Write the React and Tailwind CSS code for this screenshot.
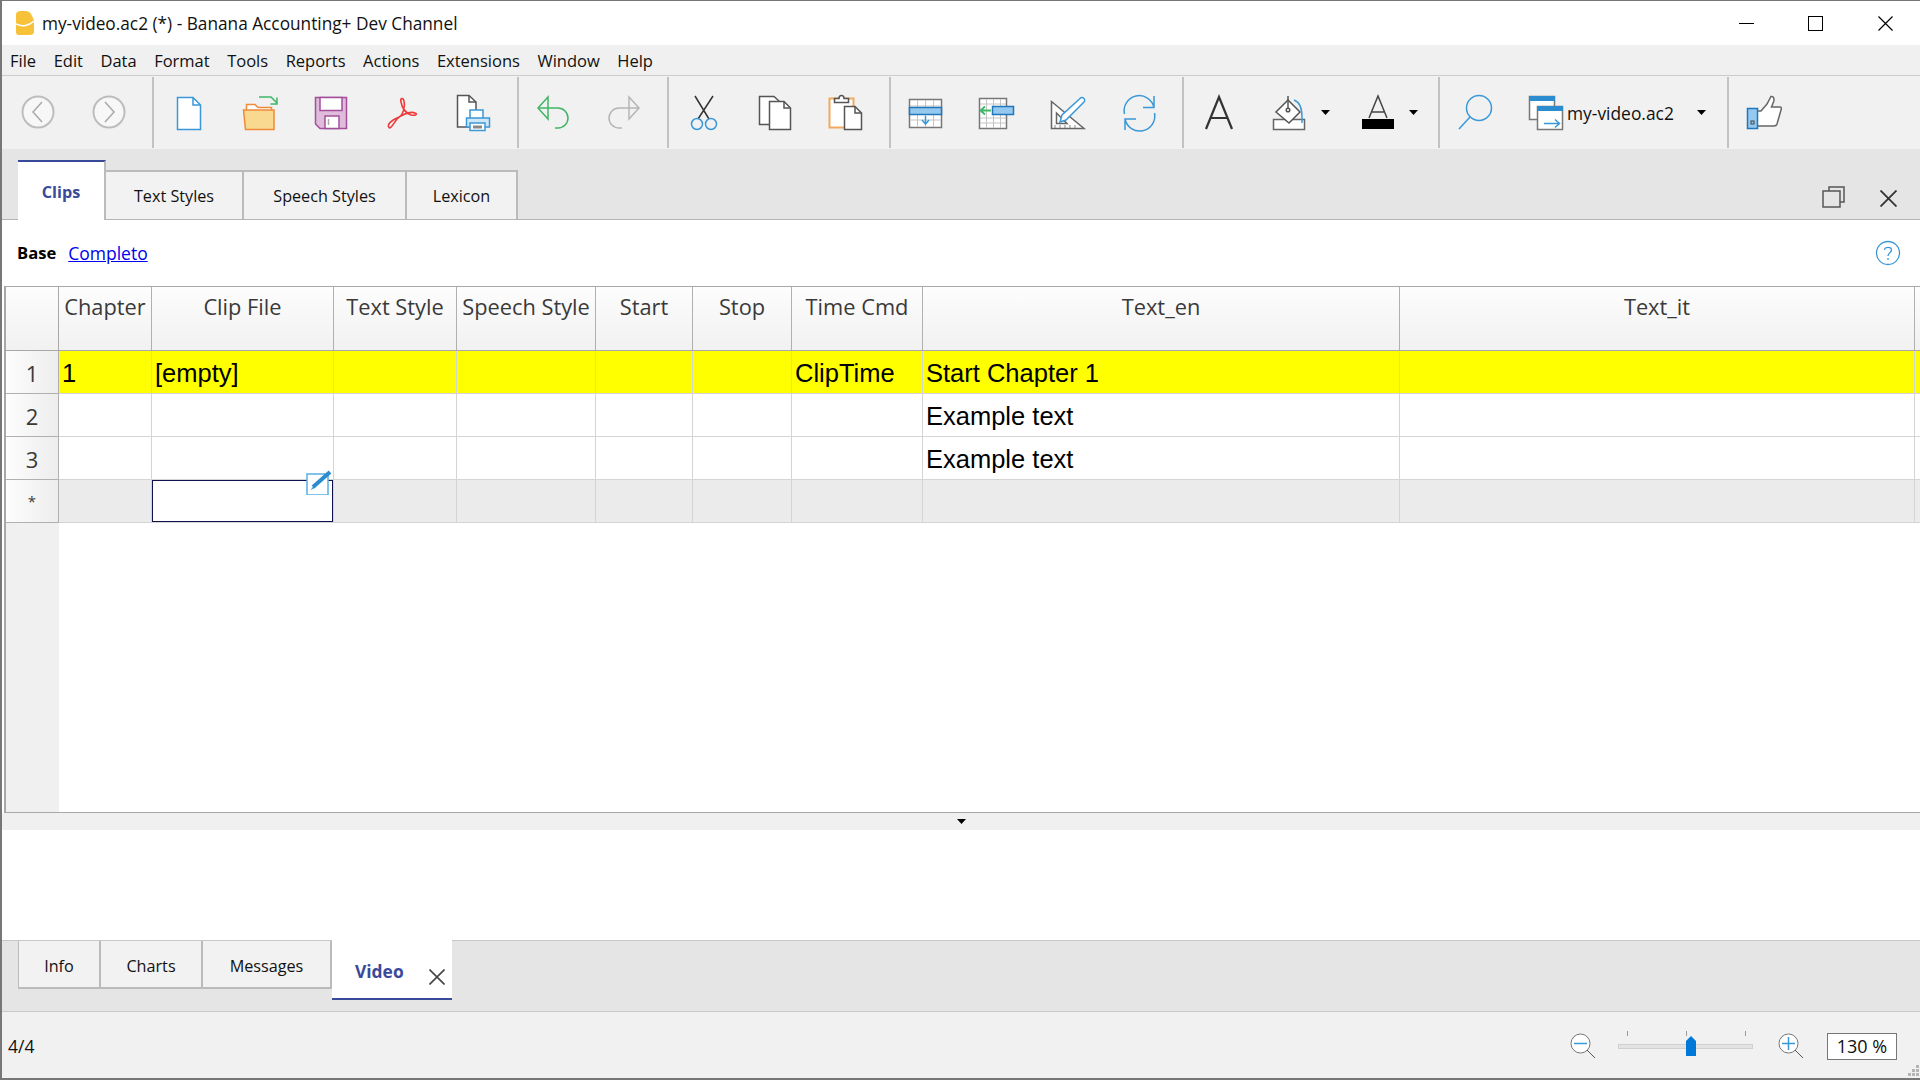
const BLUE = "#3a98d8";
const COLS = [
  { name: "Chapter", w: "w-[93px]" },
  { name: "Clip File", w: "w-[182px]" },
  { name: "Text Style", w: "w-[123px]" },
  { name: "Speech Style", w: "w-[139px]" },
  { name: "Start", w: "w-[97px]" },
  { name: "Stop", w: "w-[99px]" },
  { name: "Time Cmd", w: "w-[131px]" },
  { name: "Text_en", w: "w-[477px]" },
  { name: "Text_it", w: "w-[515px]" },
];

const ROWS = [
  { label: "1", cells: ["1", "[empty]", "", "", "", "", "ClipTime", "Start Chapter 1", ""], bg: "bg-[#ffff00]" },
  { label: "2", cells: ["", "", "", "", "", "", "", "Example text", ""], bg: "bg-white" },
  { label: "3", cells: ["", "", "", "", "", "", "", "Example text", ""], bg: "bg-white" },
];

const Icon = ({ children }) => (
  <svg width="48" height="48" viewBox="0 0 48 48" fill="none" strokeWidth="1.5">
    {children}
  </svg>
);

const ToolButton = ({ children }) => (
  <div className="w-[71px] h-full pr-[2px] flex items-center justify-center shrink-0">{children}</div>
);

const Separator = () => <div className="w-[2px] h-[71px] bg-[#c2c2c2] shrink-0" />;

const Caret = () => (
  <svg width="9" height="5" viewBox="0 0 9 5" className="shrink-0">
    <path d="M0 0H9L4.5 5Z" fill="#000" />
  </svg>
);

const Cross = ({ size, width = 1.2, color = "#000", className }) => (
  <svg width={size} height={size} viewBox={`0 0 ${size} ${size}`} className={className}>
    <path d={`M0.5 0.5L${size - 0.5} ${size - 0.5}M${size - 0.5} 0.5L0.5 ${size - 0.5}`} stroke={color} strokeWidth={width} />
  </svg>
);

const NavIcon = ({ flip }) => (
  <Icon>
    <circle cx="25" cy="23" r="15.5" fill="#f7f7f7" stroke="#bdbdbd" strokeWidth="2" />
    <path d={flip ? "M21 13L30 23L21 33" : "M29 13L20 23L29 33"} stroke="#a9a9a9" />
  </Icon>
);

const NewIcon = () => (
  <Icon>
    <path d="M12.5 8.5H28L35.5 16V40.5H12.5Z" fill="#fff" stroke={BLUE} />
    <path d="M28 8.5V16H35.5" stroke={BLUE} />
  </Icon>
);

const OpenIcon = () => (
  <Icon>
    <path d="M10.5 21V15.5H19L22 18.5H35.5V21" fill="#fff" stroke="#ef8b3a" />
    <path d="M7.5 21H38V40.5H9.5Z" fill="#f8d98f" stroke="#ef8b3a" />
    <path d="M23 8H35L41 14M41 8.5V15H34.5" stroke="#3fb566" />
  </Icon>
);

const SaveIcon = () => (
  <Icon>
    <path d="M8.5 8.5H39.5V39.5H13L8.5 35Z" fill="#dfbcdb" stroke="#a34f9b" />
    <rect x="13" y="8.5" width="22" height="13" fill="#fff" stroke="#a34f9b" />
    <rect x="18" y="27" width="14" height="12.5" fill="#fff" stroke="#a34f9b" />
    <path d="M21.5 30V36" stroke="#aaa" />
  </Icon>
);

const PdfIcon = () => (
  <Icon>
    <path
      d="M11 38.5C8.5 35 14 31 21 28C25 26 27.5 17 26 12C25 8 22 9 23 13C24 19 28 24 33 26C37.5 27 40 25 37 24C33 22 24 25 19 30C16 34 12.5 40.5 11 38.5Z"
      stroke="#ee3b3b"
      strokeWidth="1.6"
    />
  </Icon>
);

const PrintIcon = () => (
  <Icon>
    <path d="M8.5 6.5H20L27 13V38H8.5Z" fill="#fff" stroke="#555" />
    <path d="M20 6.5V13H27" stroke="#555" />
    <rect x="21" y="21" width="13" height="9" fill="#fff" stroke={BLUE} />
    <rect x="17.5" y="29" width="23" height="9" fill="#cfe6f7" stroke={BLUE} />
    <rect x="21" y="34" width="15" height="7.5" fill="#fff" stroke={BLUE} />
    <path d="M24 38H33" stroke="#888" strokeWidth="3" />
  </Icon>
);

const UndoIcon = ({ color = "#3fb566", flip }) => (
  <Icon>
    <g transform={flip ? "matrix(-1 0 0 1 46 0)" : undefined} stroke={color}>
      <path d="M18 8L8 19L18 30Z" />
      <path d="M8 19H28A10 10 0 0 1 28 39H25" />
    </g>
  </Icon>
);

const CutIcon = () => (
  <Icon>
    <path d="M15 7L29 30M33 7L18 30" stroke="#333" />
    <circle cx="17" cy="35" r="5.5" stroke={BLUE} />
    <circle cx="31" cy="35" r="5.5" stroke={BLUE} />
  </Icon>
);

const CopyIcon = () => (
  <Icon>
    <path d="M8.5 7.5H23L28 12V35.5H8.5Z" fill="#fff" stroke="#555" />
    <path d="M18.5 12.5H33L39.5 19V40.5H18.5Z" fill="#fff" stroke="#555" />
    <path d="M33 12.5V19H39.5" stroke="#555" />
  </Icon>
);

const PasteIcon = () => (
  <Icon>
    <rect x="7.5" y="9.5" width="24" height="29" fill="#fff" stroke="#f0a95e" strokeWidth="2" />
    <path d="M12.5 13.5V9.5H17A2.5 3 0 0 1 22 9.5H26.5V13.5Z" fill="#fff" stroke="#555" />
    <path d="M22.5 17.5H33L39.5 24V40.5H22.5Z" fill="#fff" stroke="#555" />
    <path d="M33 17.5V24H39.5" stroke="#555" />
  </Icon>
);

const RowIcon = () => (
  <Icon>
    <rect x="7.5" y="10.5" width="32" height="28" fill="#fff" stroke="#777" />
    <path d="M15.5 11V38M23.5 11V38M31.5 11V38M8 17H39M8 31H39" stroke="#c4c4c4" strokeWidth="1" />
    <rect x="7.5" y="18.5" width="32" height="7" fill="#95c9ef" stroke="#2277bb" />
    <path d="M23.5 27V34M20 31L23.5 35L27 31" stroke={BLUE} />
  </Icon>
);

const ColumnIcon = () => (
  <Icon>
    <rect x="6.5" y="9.5" width="27" height="30" fill="#fff" stroke="#777" />
    <path d="M13.5 10V39M20.5 10V39M27.5 10V39M7 29H33M7 34H33M7 15H33" stroke="#c4c4c4" strokeWidth="1" />
    <rect x="19.5" y="17.5" width="21" height="8" fill="#95c9ef" stroke="#2277bb" />
    <path d="M18 21.5H8M12 17.5L7.5 21.5L12 25.5" stroke="#3fb566" strokeWidth="1.8" />
  </Icon>
);

const RulerIcon = () => (
  <Icon>
    <path d="M7.5 12.5V39.5H40Z" fill="#fff" stroke="#666" />
    <path d="M12.5 24V34.5H23Z" stroke="#666" />
    <path d="M11 39V36M16 39V36M21 39V36M26 39V36M31 39V36" stroke="#888" strokeWidth="1" />
    <path d="M16 33L18 26L36 9.5A2.2 2.2 0 0 1 40 13L22 31Z" fill="#fff" stroke={BLUE} />
  </Icon>
);

const RefreshIcon = () => (
  <Icon>
    <path d="M9.5 25A15 15 0 0 1 39 18.5M39 7V18.5H28" stroke={BLUE} />
    <path d="M39.5 24A15 15 0 0 1 10 30M10 41V30H21" stroke={BLUE} />
  </Icon>
);

const FontIcon = () => (
  <Icon>
    <path d="M11 40L24 8L37 40M15.5 29H32.5" stroke="#333" strokeWidth="2.2" />
  </Icon>
);

const FillIcon = () => (
  <Icon>
    <rect x="9.5" y="30.5" width="31" height="10" fill="#fff" stroke="#666" />
    <path d="M24 11L36 23L25 34L12 23Z" fill="#fff" stroke="#555" />
    <path d="M24 7V20" stroke="#555" />
    <circle cx="24" cy="21" r="1.8" stroke="#555" />
    <path d="M30 11C36 13 38 19 38 28V34" stroke={BLUE} />
  </Icon>
);

const TextColorIcon = () => (
  <Icon>
    <path d="M15 29L24 7L33 29M17.5 23H30.5" stroke="#444" />
    <rect x="8" y="30" width="32" height="10" fill="#000" />
  </Icon>
);

const SearchIcon = () => (
  <Icon>
    <circle cx="28" cy="19" r="12.5" stroke={BLUE} />
    <path d="M19 28L8 40" stroke={BLUE} />
  </Icon>
);

const WindowIcon = () => (
  <Icon>
    <rect x="7.5" y="7.5" width="25" height="23" fill="#fff" stroke="#777" />
    <rect x="7" y="7" width="26" height="5" fill="#2b8dd0" />
    <rect x="15.5" y="17.5" width="25" height="23" fill="#fff" stroke="#777" />
    <rect x="15" y="17" width="26" height="5" fill="#2b8dd0" />
    <path d="M22 34.5H37M33 30.5L37.5 34.5L33 38.5" stroke={BLUE} />
  </Icon>
);

const ThumbIcon = () => (
  <Icon>
    <path
      d="M18 22H22L28 15L32 7.5C35 7 35.5 10 34.5 13L32.5 18H41.5C42.5 18 42.5 20 42 21L38 35C37.5 36.5 36.5 37 35 37H18"
      fill="#fff"
      stroke="#666"
    />
    <rect x="8.5" y="19.5" width="10" height="20" fill="#95c9ef" stroke="#2277bb" />
    <rect x="12" y="32" width="3" height="3" stroke="#444" strokeWidth="1" />
  </Icon>
);

const TitleBar = () => (
  <div className="h-[44px] bg-white flex items-center shrink-0">
    <svg width="18" height="24" viewBox="0 0 18 24" className="ml-[14px]">
      <path d="M0 4C0 1 2 0 5 0H9C12 0 14 1 15 3L18 9V20C18 23 16 24 14 24H3C1 24 0 23 0 21Z" fill="#f8c13a" />
      <path d="M0 13C6 16 13 15 18 10" stroke="#fff" strokeWidth="1.5" fill="none" />
    </svg>
    <span className="ml-[8px] pt-[1px] text-[17.25px] text-[#111]">my-video.ac2 (*) - Banana Accounting+ Dev Channel</span>
    <div className="ml-auto flex items-center">
      <div className="w-[15px] h-[1px] bg-black mr-[54px]" />
      <div className="w-[15px] h-[15px] border border-black mr-[55px]" />
      <Cross size={15} className="mr-[27px]" />
    </div>
  </div>
);

const MenuBar = () => (
  <div className="h-[31px] bg-[#f0f0f0] border-b border-[#cccccc] flex items-center gap-[17.5px] pl-[8px] pt-[2px] text-[16.5px] text-[#111] shrink-0">
    {["File", "Edit", "Data", "Format", "Tools", "Reports", "Actions", "Extensions", "Window", "Help"].map((m) => (
      <span key={m}>{m}</span>
    ))}
  </div>
);

const ToolBar = () => (
  <div className="h-[73px] bg-[#f1f1f1] flex items-center shrink-0">
    <ToolButton><NavIcon /></ToolButton>
    <ToolButton><NavIcon flip /></ToolButton>
    <div className="w-[8px]" />
    <Separator />
    <ToolButton><NewIcon /></ToolButton>
    <ToolButton><OpenIcon /></ToolButton>
    <ToolButton><SaveIcon /></ToolButton>
    <ToolButton><PdfIcon /></ToolButton>
    <ToolButton><PrintIcon /></ToolButton>
    <div className="w-[8px]" />
    <Separator />
    <ToolButton><UndoIcon /></ToolButton>
    <ToolButton><UndoIcon color="#b5b5b5" flip /></ToolButton>
    <div className="w-[6px]" />
    <Separator />
    <ToolButton><CutIcon /></ToolButton>
    <ToolButton><CopyIcon /></ToolButton>
    <ToolButton><PasteIcon /></ToolButton>
    <div className="w-[7px]" />
    <Separator />
    <ToolButton><RowIcon /></ToolButton>
    <ToolButton><ColumnIcon /></ToolButton>
    <ToolButton><RulerIcon /></ToolButton>
    <ToolButton><RefreshIcon /></ToolButton>
    <div className="w-[7px]" />
    <Separator />
    <div className="w-[69px] flex justify-center shrink-0"><FontIcon /></div>
    <ToolButton><FillIcon /></ToolButton>
    <div className="-ml-[4px] w-[34px] pl-[1px]"><Caret /></div>
    <div className="w-[48px] shrink-0"><TextColorIcon /></div>
    <div className="w-[36px] pl-[7px]"><Caret /></div>
    <Separator />
    <div className="w-[69px] flex justify-center shrink-0"><SearchIcon /></div>
    <div className="w-[48px] ml-[13px] shrink-0"><WindowIcon /></div>
    <span className="w-[130px] -ml-[3px] text-[17.4px] text-[#111] pt-[2px] shrink-0">my-video.ac2</span>
    <Caret />
    <div className="w-[21px]" />
    <Separator />
    <div className="w-[67px] flex justify-center shrink-0"><ThumbIcon /></div>
  </div>
);

const TopTabs = () => (
  <div className="h-[71px] bg-[#e5e5e5] border-b border-[#b5b5b5] flex items-end pl-[16px] text-[16.2px] text-[#111] shrink-0">
    <div className="w-[88px] h-[60px] -mb-[1px] bg-white border-t-2 border-[#3a4a9a] border-r-2 border-r-[#bbbbbb] flex items-center justify-center pt-[3px] font-bold text-[#3a4a9a]">
      Clips
    </div>
    {[
      ["Text Styles", "w-[138px]"],
      ["Speech Styles", "w-[163px]"],
      ["Lexicon", "w-[111px]"],
    ].map(([t, w]) => (
      <div key={t} className={`${w} h-[49px] bg-[#f2f2f2] border-t-2 border-r-2 border-[#bbbbbb] flex items-center justify-center pt-[2px]`}>
        {t}
      </div>
    ))}
    <svg width="24" height="24" viewBox="0 0 24 24" fill="none" stroke="#555" strokeWidth="1.5" className="ml-auto mb-[10px] mr-[35px]">
      <path d="M8 6V2H23V17H19" />
      <rect x="2" y="6" width="17" height="16" />
    </svg>
    <Cross size={17} width={1.8} color="#333" className="mb-[12px] mr-[23px]" />
  </div>
);

const FilterBar = () => (
  <div className="h-[66px] bg-white flex items-center pl-[15px] pt-[1px] text-[16.6px] shrink-0">
    <span className="font-bold text-black">Base</span>
    <span className="ml-[12px] text-[17.5px] text-[#0000ee] underline">Completo</span>
    <svg width="26" height="26" viewBox="0 0 26 26" fill="none" stroke={BLUE} strokeWidth="1.3" className="ml-auto mr-[19px] -mt-[1px]">
      <circle cx="13" cy="13" r="11.5" />
      <path d="M9.5 10C9.5 6.5 16.5 6.5 16.5 10C16.5 13 13 12.5 13 16" />
      <path d="M13 18V20" />
    </svg>
  </div>
);

const GridTable = () => (
  <div className="h-[527px] ml-[2px] border-l-2 border-t border-b border-[#a8a8a8] bg-white flex flex-col shrink-0">
    {/* header */}
    <div className="h-[64px] flex bg-gradient-to-b from-[#fdfdfd] to-[#f1f1f1] border-b border-[#a8a8a8] shrink-0 text-[21.8px] text-[#3a3a3a]">
      <div className="w-[53px] border-r border-[#a8a8a8]" />
      {COLS.map((c) => (
        <div key={c.name} className={`${c.w} border-r border-[#b0b0b0] text-center pt-[4px] whitespace-nowrap`}>
          {c.name}
        </div>
      ))}
    </div>

    {ROWS.map((r) => (
      <div key={r.label} className={`h-[43px] flex shrink-0 ${r.bg} border-b border-[#d4d4d4]`}>
        <div className="w-[53px] flex items-center justify-center pt-[2px] bg-gradient-to-r from-[#fdfdfd] to-[#ededed] border-r border-b border-[#b0b0b0] text-[22px] text-[#3a3a3a] -mb-[1px]">
          {r.label}
        </div>
        {COLS.map((c, i) => (
          <div
            key={c.name}
            className={`${c.w} border-r border-[#d4d4d4] pl-[3px] pt-[3px] flex items-center whitespace-nowrap font-['Liberation_Sans',sans-serif] text-[25.5px] text-black`}
          >
            {r.cells[i]}
          </div>
        ))}
      </div>
    ))}

    {/* new row */}
    <div className="h-[43px] flex shrink-0 bg-[#ebebeb] border-b border-[#d4d4d4]">
      <div className="w-[53px] flex items-center justify-center bg-gradient-to-r from-[#fdfdfd] to-[#ededed] border-r border-b border-[#b0b0b0] text-[15px] text-[#3a3a3a] -mb-[1px]">
        *
      </div>
      {COLS.map((c, i) => (
        <div key={c.name} className={`${c.w} border-r border-[#d4d4d4] relative`}>
          {i === 1 && (
            <div className="absolute top-0 left-0 w-[181px] h-[42px] bg-white border border-[#101050]">
              <svg width="27" height="25" viewBox="0 0 27 25" className="absolute -top-[11px] -right-[1px]">
                <rect x="1" y="4" width="21" height="21" fill="#fff" stroke="#58aee4" strokeWidth="1.5" />
                <path d="M7 17L24 2" stroke="#2b8dd0" strokeWidth="4" />
                <path d="M4.5 20L8 15.5L9.5 17.5Z" fill="#2b8dd0" />
              </svg>
            </div>
          )}
        </div>
      ))}
    </div>

    <div className="flex-1 w-[53px] bg-[#f0f0f0]" />
  </div>
);

const Splitter = () => (
  <div className="h-[17px] bg-[#f0f0f0] flex justify-center items-center shrink-0">
    <Caret />
  </div>
);

const BottomTabs = () => (
  <div className="h-[72px] bg-[#e5e5e5] border-y border-[#c8c8c8] shrink-0 flex items-start pl-[16px] text-[16.2px] text-[#111]">
    {[
      ["Info", "w-[83px]"],
      ["Charts", "w-[102px]"],
      ["Messages", "w-[129px]"],
    ].map(([t, w]) => (
      <div key={t} className={`${w} h-[48px] bg-[#f2f2f2] border-b-2 border-r-2 border-[#bbbbbb] first:border-l flex items-center justify-center pt-[4px]`}>
        {t}
      </div>
    ))}
    <div className="relative w-[120px] h-[60px] bg-white border-b-2 border-[#3a4a9a] -mt-[1px] flex items-center pl-[23px] pt-[4px] text-[17.4px] font-bold text-[#3a4a9a]">
      Video
      <Cross size={16} width={1.6} color="#444" className="absolute right-[7px] top-[29px]" />
    </div>
  </div>
);

const StatusBar = () => (
  <div className="h-[66px] bg-[#f1f1f1] shrink-0 flex items-center pl-[6px] pt-[3px] text-[17.5px] text-[#111] relative">
    4/4
    <div className="ml-auto flex items-center">
      <svg width="28" height="28" viewBox="0 0 28 28" fill="none">
        <circle cx="10.5" cy="10.5" r="9.5" fill="#fff" stroke="#777" />
        <path d="M4 10.5H17" stroke={BLUE} strokeWidth="1.5" />
        <path d="M17 17L25 25" stroke="#555" />
      </svg>
      <div className="relative w-[135px] h-[5px] ml-[20px] mr-[25px] bg-[#e3e3e3] border border-[#d0d0d0]">
        <span className="absolute left-[8px] -top-[14px] w-[1px] h-[5px] bg-[#999]" />
        <span className="absolute left-[67px] -top-[14px] w-[1px] h-[5px] bg-[#999]" />
        <span className="absolute left-[126px] -top-[14px] w-[1px] h-[5px] bg-[#999]" />
        <svg width="10" height="20" viewBox="0 0 10 20" className="absolute left-[67px] -top-[9px]">
          <path d="M0 5L5 0L10 5V20H0Z" fill="#0078d7" />
        </svg>
      </div>
      <svg width="28" height="28" viewBox="0 0 28 28" fill="none">
        <circle cx="10.5" cy="10.5" r="9.5" fill="#fff" stroke="#777" />
        <path d="M4 10.5H17M10.5 4V17" stroke={BLUE} strokeWidth="1.5" />
        <path d="M17 17L25 25" stroke="#555" />
      </svg>
      <div className="w-[70px] h-[27px] ml-[21px] mr-[23px] border border-[#777] bg-white flex items-center justify-center text-[18px]">
        130 %
      </div>
    </div>
    <svg width="12" height="12" viewBox="0 0 12 12" fill="#b5b5b5" className="absolute right-[0px] bottom-[1px]">
      <rect x="8" y="0" width="3" height="3" />
      <rect x="4" y="4" width="3" height="3" />
      <rect x="8" y="4" width="3" height="3" />
      <rect x="0" y="8" width="3" height="3" />
      <rect x="4" y="8" width="3" height="3" />
      <rect x="8" y="8" width="3" height="3" />
    </svg>
  </div>
);

const App = () => (
  <div className="w-[1920px] h-[1080px] flex flex-col overflow-hidden border-l-2 border-t border-b-2 border-[#777777] bg-white font-['Open_Sans',sans-serif]">
    <TitleBar />
    <MenuBar />
    <ToolBar />
    <TopTabs />
    <FilterBar />
    <GridTable />
    <Splitter />
    <div className="h-[110px] bg-white shrink-0" />
    <BottomTabs />
    <StatusBar />
  </div>
);

export default App;
